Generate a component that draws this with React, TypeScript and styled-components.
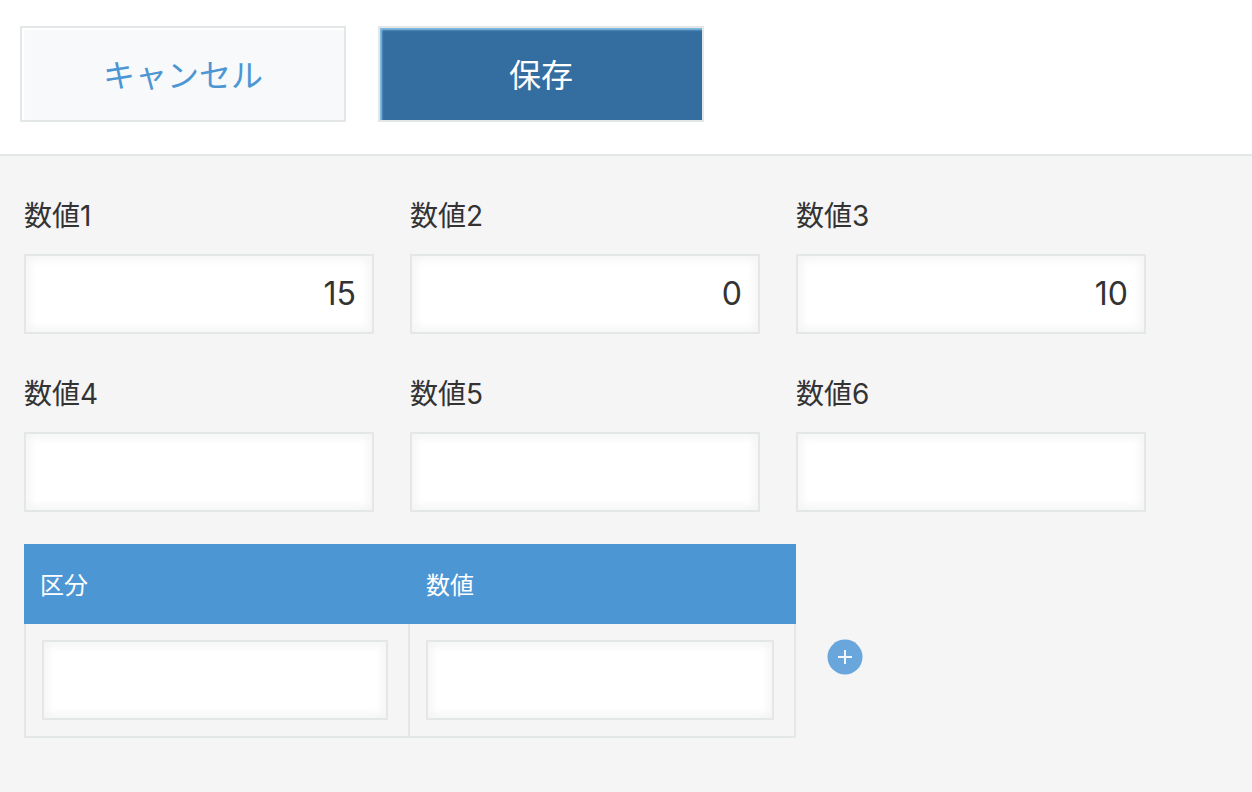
import React, { useState } from "react";
import styled, { createGlobalStyle } from "styled-components";

const GlobalStyle = createGlobalStyle`
  *, *::before, *::after { box-sizing: border-box; }
  body {
    margin: 0;
    background: #f5f5f5;
    color: #333333;
    font-family: Inter, "Noto Sans CJK JP", sans-serif;
    font-size: 28px;
  }
  button, input { font-family: inherit; }
`;

const Toolbar = styled.header`
  display: flex;
  flex-wrap: wrap;
  gap: 32px;
  padding: 26px 20px 32px;
  background: #ffffff;
  border-bottom: 2px solid #e3e7e8;
`;

const ActionButton = styled.button<{ $primary?: boolean }>`
  width: 326px;
  height: 96px;
  padding: 4px 16px 0;
  border: 2px solid #e3e7e8;
  background: ${(p) => (p.$primary ? "#346ea0" : "#f7f9fb")};
  box-shadow: inset 2px 2px 2px ${(p) => (p.$primary ? "#85bfe6" : "#ffffff")};
  color: ${(p) => (p.$primary ? "#ffffff" : "#4c96d4")};
  font-size: 32px;
  line-height: 48px;
  cursor: pointer;
`;

const Content = styled.main`
  padding: 40px 24px 54px;
`;

const FieldRow = styled.div`
  display: flex;
  flex-wrap: wrap;
  gap: 40px 36px;
  margin-bottom: 40px;

  &:last-of-type { margin-bottom: 32px; }
`;

const Field = styled.div`
  display: flex;
  flex-direction: column;
  gap: 18px;
  width: 350px;
`;

const FieldLabel = styled.label`
  font-size: 28px;
  line-height: 40px;
`;

const TextBox = styled.input`
  display: block;
  width: 100%;
  height: 80px;
  padding: 0 16px 2px;
  border: 2px solid #e3e7e7;
  border-radius: 0;
  background: #ffffff;
  box-shadow: inset 4px 4px 8px #f5f5f5, inset -4px -4px 8px #f5f5f5;
  color: #333333;
  font-size: 32px;
  text-align: right;
`;

const SubTable = styled.table`
  border-collapse: separate;
  border-spacing: 0;
  table-layout: fixed;
  width: 848px;
`;

const Column = styled.col<{ $width: number }>`
  width: ${(p) => p.$width}px;
`;

const HeadCell = styled.th`
  height: 80px;
  padding: 4px 16px 0;
  background: #4c96d4;
  color: #ffffff;
  font-size: 24px;
  font-weight: 400;
  line-height: 36px;
  text-align: left;
`;

const BodyCell = styled.td`
  padding: 16px 20px 16px 16px;
  border: solid #e3e7e7;
  border-width: 0 2px 2px 0;

  &:first-child { border-left-width: 2px; }
`;

const ActionCell = styled.td`
  padding: 14px 0 0 30px;
  vertical-align: top;
`;

const AddButton = styled.button`
  display: flex;
  align-items: center;
  justify-content: center;
  width: 38px;
  height: 38px;
  padding: 0;
  border: 0;
  background: transparent;
  cursor: pointer;
`;

const fieldRows = [
  [
    { id: "num1", label: "数値1", value: "15" },
    { id: "num2", label: "数値2", value: "0" },
    { id: "num3", label: "数値3", value: "10" },
  ],
  [
    { id: "num4", label: "数値4", value: "" },
    { id: "num5", label: "数値5", value: "" },
    { id: "num6", label: "数値6", value: "" },
  ],
];

function AddIcon() {
  return (
    <svg width="36" height="36" viewBox="0 0 36 36" aria-hidden="true">
      <circle cx="18" cy="18" r="17.5" fill="#68a6dc" />
      <path d="M18 11v14M11 18h14" stroke="#f4f8fc" strokeWidth="2" fill="none" />
    </svg>
  );
}

export default function App() {
  const [rows, setRows] = useState([0]);

  return (
    <>
      <GlobalStyle />
      <Toolbar>
        <ActionButton type="button">キャンセル</ActionButton>
        <ActionButton type="button" $primary>保存</ActionButton>
      </Toolbar>
      <Content lang="ja">
        {fieldRows.map((fields) => (
          <FieldRow key={fields[0].id}>
            {fields.map((f) => (
              <Field key={f.id}>
                <FieldLabel htmlFor={f.id}>{f.label}</FieldLabel>
                <TextBox id={f.id} type="text" inputMode="decimal" defaultValue={f.value} />
              </Field>
            ))}
          </FieldRow>
        ))}
        <SubTable>
          <colgroup>
            <Column $width={386} />
            <Column $width={386} />
            <Column $width={76} />
          </colgroup>
          <thead>
            <tr>
              <HeadCell scope="col" id="col-kind">区分</HeadCell>
              <HeadCell scope="col" id="col-number">数値</HeadCell>
              <td />
            </tr>
          </thead>
          <tbody>
            {rows.map((row) => (
              <tr key={row}>
                <BodyCell><TextBox type="text" aria-labelledby="col-kind" /></BodyCell>
                <BodyCell><TextBox type="text" inputMode="decimal" aria-labelledby="col-number" /></BodyCell>
                <ActionCell>
                  <AddButton
                    type="button"
                    aria-label="行を追加する"
                    onClick={() => setRows((r) => [...r, r.length])}
                  >
                    <AddIcon />
                  </AddButton>
                </ActionCell>
              </tr>
            ))}
          </tbody>
        </SubTable>
      </Content>
    </>
  );
}
